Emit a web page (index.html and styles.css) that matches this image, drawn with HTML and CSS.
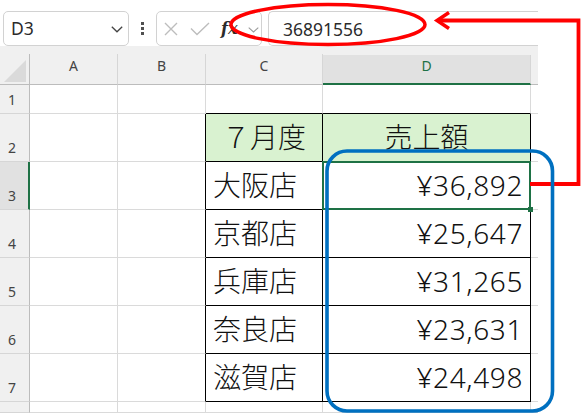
FILE: index.html
```html
<!DOCTYPE html>
<html lang="ja">
<head>
<meta charset="utf-8">
<link rel="stylesheet" href="styles.css">
</head>
<body>
<div class="formula-bar">
  <div class="namebox">
    <span class="ref">D3</span>
    <svg class="chev" width="12" height="7" viewBox="0 0 12 7"><path d="M0.8 0.8 L6 5.8 L11.2 0.8" fill="none" stroke="#444" stroke-width="1.3"/></svg>
  </div>
  <div class="kebab"><i></i><i></i><i></i></div>
  <div class="fxbox">
    <svg class="ico-x" width="14" height="14" viewBox="0 0 14 14"><path d="M1 1 L13 13 M13 1 L1 13" stroke="#bdbdbd" stroke-width="1.4" fill="none"/></svg>
    <svg class="ico-ok" width="20" height="14" viewBox="0 0 20 14"><path d="M1 6.5 L7 12.5 L19 1" stroke="#bdbdbd" stroke-width="1.4" fill="none"/></svg>
    <span class="fx">fx</span>
    <svg class="ico-dd" width="11" height="6" viewBox="0 0 11 6"><path d="M0.7 0.7 L5.5 5 L10.3 0.7" stroke="#9a9a9a" stroke-width="1.1" fill="none"/></svg>
  </div>
  <div class="input">36891556</div>
</div>

<div class="sheet-wrap">
  <div class="sheet">
    <div class="corner"><span class="tri"></span></div>
    <div class="ch">A</div>
    <div class="ch">B</div>
    <div class="ch">C</div>
    <div class="ch sel">D</div>
    <div class="ch last"></div>

    <div class="rh">1</div>
    <div class="c"></div>
    <div class="c"></div>
    <div class="c bb"></div>
    <div class="c bb"></div>
    <div class="c e"></div>

    <div class="rh">2</div>
    <div class="c"></div>
    <div class="c br"></div>
    <div class="c t hd">７月度</div>
    <div class="c t hd">売上額</div>
    <div class="c e"></div>

    <div class="rh sel">3</div>
    <div class="c"></div>
    <div class="c br"></div>
    <div class="c t jp">大阪店</div>
    <div class="c t num cur">¥36,892</div>
    <div class="c e"></div>

    <div class="rh">4</div>
    <div class="c"></div>
    <div class="c br"></div>
    <div class="c t jp">京都店</div>
    <div class="c t num">¥25,647</div>
    <div class="c e"></div>

    <div class="rh">5</div>
    <div class="c"></div>
    <div class="c br"></div>
    <div class="c t jp">兵庫店</div>
    <div class="c t num">¥31,265</div>
    <div class="c e"></div>

    <div class="rh">6</div>
    <div class="c"></div>
    <div class="c br"></div>
    <div class="c t jp">奈良店</div>
    <div class="c t num">¥23,631</div>
    <div class="c e"></div>

    <div class="rh">7</div>
    <div class="c"></div>
    <div class="c br"></div>
    <div class="c t jp">滋賀店</div>
    <div class="c t num">¥24,498</div>
    <div class="c e"></div>

    <div class="rh"></div>
    <div class="c"></div>
    <div class="c"></div>
    <div class="c"></div>
    <div class="c"></div>
    <div class="c e"></div>
  </div>
</div>

<svg class="annot" width="581" height="413" viewBox="0 0 581 413">
  <ellipse cx="328" cy="24.5" rx="97" ry="20" fill="none" stroke="#ff0000" stroke-width="3.5"/>
  <polyline points="530,184 578.5,184 578.5,20.5 438,20.5" fill="none" stroke="#ff0000" stroke-width="3.8" stroke-linejoin="miter"/>
  <polyline points="449,12.5 437,20.5 449,28.5" fill="none" stroke="#ff0000" stroke-width="3.5" stroke-linejoin="miter"/>
  <rect x="327" y="151" width="225.5" height="260" rx="20" ry="20" fill="none" stroke="#0070c0" stroke-width="3.6"/>
</svg>
</body>
</html>
```

FILE: styles.css
```css
html, body {
  margin: 0;
  padding: 0;
}
body {
  width: 581px;
  height: 413px;
  overflow: hidden;
  background: #ffffff;
  font-family: "Noto Sans", "Noto Sans CJK JP", sans-serif;
  position: relative;
}

/* ---------- formula bar ---------- */
.formula-bar {
  display: flex;
  width: 538px;
  height: 35px;
  margin-top: 11px;
  box-sizing: border-box;
}
.namebox {
  margin-left: 3px;
  width: 126px;
  box-sizing: border-box;
  border: 1px solid #d2d2d2;
  border-radius: 5px;
  display: flex;
  align-items: center;
  justify-content: space-between;
  padding: 0 5px 0 7px;
  background: #fff;
}
.ref {
  font-size: 17.5px;
  color: #2b2b2b;
  line-height: 1;
  padding-top: 1px;
}
.chev {
  display: block;
  margin-top: 2px;
}
.kebab {
  width: 27px;
  display: flex;
  flex-direction: column;
  align-items: center;
  justify-content: center;
  gap: 2px;
}
.kebab i {
  display: block;
  width: 3px;
  height: 3px;
  background: #505050;
}
.fxbox {
  width: 106px;
  box-sizing: border-box;
  border: 1px solid #d2d2d2;
  border-radius: 5px;
  display: flex;
  align-items: center;
  padding-left: 7px;
  background: #fff;
}
.ico-x { display: block; margin-top: 1px; }
.ico-ok { display: block; margin-left: 12px; }
.fx {
  margin-left: 11px;
  font-family: "DejaVu Serif", serif;
  font-style: italic;
  font-weight: bold;
  font-size: 16px;
  color: #2a2a2a;
  line-height: 1;
}
.ico-dd { display: block; margin-left: 11px; margin-top: 2px; }
.input {
  flex: 1;
  margin-left: 6px;
  box-sizing: border-box;
  border: 1px solid #d2d2d2;
  border-right: none;
  border-radius: 5px 0 0 5px;
  padding-left: 14px;
  display: flex;
  align-items: center;
  font-size: 17.5px;
  color: #2b2b2b;
  background: #fff;
}

/* ---------- sheet ---------- */
.sheet-wrap {
  width: 538px;
  background: #f0f0f0;
  padding-top: 8px;
}
.sheet {
  display: grid;
  grid-template-columns: 30px 88px 88px 117px 208px 7px;
  grid-template-rows: 31px 29px repeat(6, 48px) 11px;
}
.sheet > div {
  box-sizing: border-box;
  min-width: 0;
}
.corner {
  background: #f0f0f0;
  border-right: 1px solid #bcbcbc;
  border-bottom: 1px solid #bcbcbc;
  display: flex;
  justify-content: flex-end;
  align-items: flex-end;
  padding: 0 3px 2px 0;
}
.tri {
  width: 0;
  height: 0;
  border-left: 22px solid transparent;
  border-bottom: 22px solid #dadada;
}
.ch {
  background: #f0f0f0;
  border-right: 1px solid #d6d6d6;
  border-bottom: 1px solid #bcbcbc;
  display: flex;
  justify-content: center;
  align-items: flex-start;
  padding-top: 2px;
  font-size: 14px;
  line-height: 19px;
  color: #444;
}
.ch.sel {
  background: #e1e1e1;
  border-bottom: 2px solid #1e7145;
  color: #1e7145;
  margin-top: 1px;
  padding-top: 1px;
}
.ch.last {
  border-right: none;
}
.rh {
  background: #f0f0f0;
  border-right: 1px solid #bcbcbc;
  border-bottom: 1px solid #d6d6d6;
  display: flex;
  align-items: flex-end;
  padding: 0 0 4px 8px;
  font-size: 14px;
  line-height: 19px;
  color: #444;
  overflow: hidden;
}
.rh.sel {
  background: #e1e1e1;
  border-right: 2px solid #1e7145;
}
.c {
  background: #fff;
  border-right: 1px solid #dadada;
  border-bottom: 1px solid #dadada;
}
.c.e {
  border-right: none;
}
.c.bb { border-bottom-color: #000; }
.c.br { border-right-color: #000; }
.c.t {
  border-right-color: #000;
  border-bottom-color: #000;
  display: flex;
  align-items: center;
  font-size: 28px;
  line-height: 1;
  color: #111;
  font-weight: 300;
}
.c.hd {
  background: #d9f2d0;
  justify-content: center;
  font-family: "Noto Sans CJK JP", sans-serif;
  padding-bottom: 3px;
}
.c.jp {
  font-family: "Noto Sans CJK JP", sans-serif;
  padding: 0 0 3px 7px;
}
.c.num {
  font-family: "Noto Sans", sans-serif;
  justify-content: flex-end;
  padding: 0 7px 2px 0;
  letter-spacing: 0.6px;
}
.c.cur {
  position: relative;
}
.c.cur::after {
  content: "";
  position: absolute;
  left: -1px;
  top: -1px;
  right: -1px;
  bottom: -1px;
  border: 2px solid #1e7145;
}
.c.cur::before {
  content: "";
  position: absolute;
  right: -3px;
  bottom: -3px;
  width: 5px;
  height: 5px;
  background: #1e7145;
  z-index: 2;
}

/* ---------- annotations ---------- */
.annot {
  position: absolute;
  left: 0;
  top: 0;
  z-index: 10;
  pointer-events: none;
}
```
